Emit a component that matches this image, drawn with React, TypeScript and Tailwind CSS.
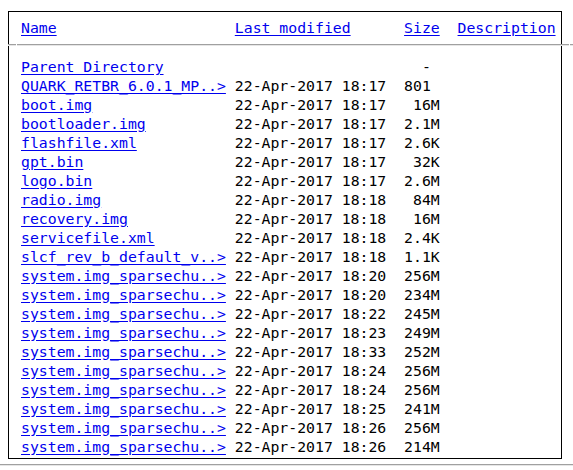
const rows: [string, string, string][] = [
  ["QUARK_RETBR_6.0.1_MP..>", "22-Apr-2017 18:17", "801"],
  ["boot.img", "22-Apr-2017 18:17", " 16M"],
  ["bootloader.img", "22-Apr-2017 18:17", "2.1M"],
  ["flashfile.xml", "22-Apr-2017 18:17", "2.6K"],
  ["gpt.bin", "22-Apr-2017 18:17", " 32K"],
  ["logo.bin", "22-Apr-2017 18:17", "2.6M"],
  ["radio.img", "22-Apr-2017 18:18", " 84M"],
  ["recovery.img", "22-Apr-2017 18:18", " 16M"],
  ["servicefile.xml", "22-Apr-2017 18:18", "2.4K"],
  ["slcf_rev_b_default_v..>", "22-Apr-2017 18:18", "1.1K"],
  ["system.img_sparsechu..>", "22-Apr-2017 18:20", "256M"],
  ["system.img_sparsechu..>", "22-Apr-2017 18:20", "234M"],
  ["system.img_sparsechu..>", "22-Apr-2017 18:22", "245M"],
  ["system.img_sparsechu..>", "22-Apr-2017 18:23", "249M"],
  ["system.img_sparsechu..>", "22-Apr-2017 18:33", "252M"],
  ["system.img_sparsechu..>", "22-Apr-2017 18:24", "256M"],
  ["system.img_sparsechu..>", "22-Apr-2017 18:24", "256M"],
  ["system.img_sparsechu..>", "22-Apr-2017 18:25", "241M"],
  ["system.img_sparsechu..>", "22-Apr-2017 18:26", "256M"],
  ["system.img_sparsechu..>", "22-Apr-2017 18:26", "214M"],
];

const link = "text-[#0000ee] underline underline-offset-2";
const line = "h-0 border-t border-b border-t-[#a0a0a0] border-b-[#e6e6e6]";

export default function App() {
  return (
    <div className="w-[573px] h-[470px] overflow-hidden bg-white pt-[11px] font-['DejaVu_Sans_Mono',monospace] text-[14.8px] leading-[19px] text-black">
      <div className="ml-[8px] w-[554px] h-[448px] border border-black pl-[12px] pt-[6px]">
        <div className="whitespace-pre">
          <a className={link}>Name</a>
          {"                    "}
          <a className={link}>Last modified</a>
          {"      "}
          <a className={link}>Size</a>
          {"  "}
          <a className={link}>Description</a>
        </div>

        <div className="flex -ml-[13px] mt-[7px] w-[573px]">
          <div className={`${line} w-[8px]`} />
          <div className="w-px" />
          <div className={`${line} w-[552px]`} />
          <div className="w-px" />
          <div className={`${line} w-[11px]`} />
        </div>

        <div className="mt-[10.5px] whitespace-pre">
          <div>
            <a className={link}>Parent Directory</a>
            {"                             -"}
          </div>
          {rows.map(([name, date, size], i) => (
            <div key={i}>
              <a className={link}>{name}</a>
              {" ".repeat(24 - name.length)}
              {date}
              {"  "}
              {size}
            </div>
          ))}
        </div>
      </div>
      <div className={`mt-[5px] w-[573px] ${line}`} />
    </div>
  );
}
